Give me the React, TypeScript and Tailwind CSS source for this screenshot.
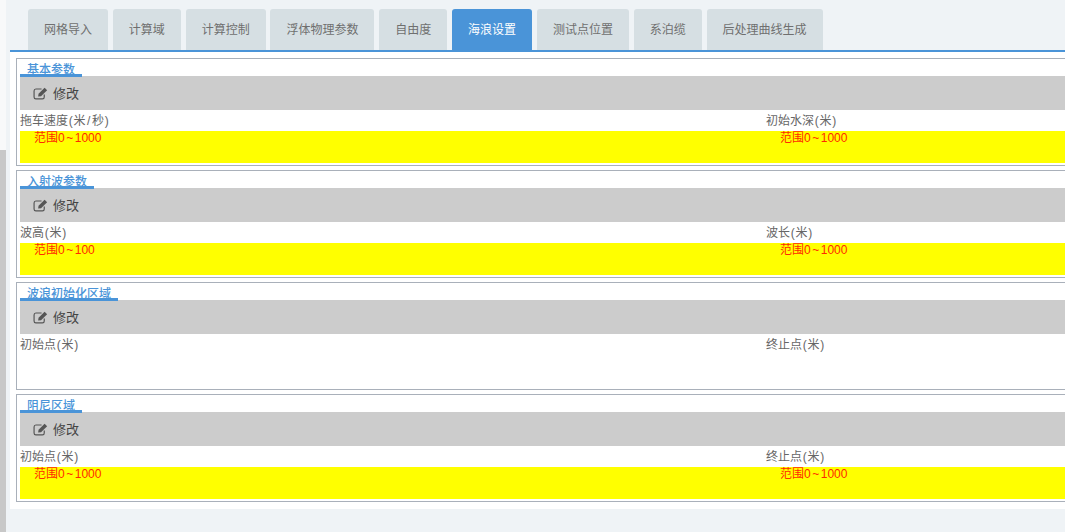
import React from 'react';

const tabs = ['网格导入', '计算域', '计算控制', '浮体物理参数', '自由度', '海浪设置', '测试点位置', '系泊缆', '后处理曲线生成'];

type Field = { label: string; unit: string; max?: string };
type Group = { title: string; underline: string; left: Field; right: Field };

const groups: Group[] = [
  {
    title: '基本参数',
    underline: 'w-[62px]',
    left: { label: '拖车速度', unit: '米/秒', max: '1000' },
    right: { label: '初始水深', unit: '米', max: '1000' },
  },
  {
    title: '入射波参数',
    underline: 'w-[74px]',
    left: { label: '波高', unit: '米', max: '100' },
    right: { label: '波长', unit: '米', max: '1000' },
  },
  {
    title: '波浪初始化区域',
    underline: 'w-[98px]',
    left: { label: '初始点', unit: '米' },
    right: { label: '终止点', unit: '米' },
  },
  {
    title: '阻尼区域',
    underline: 'w-[62px]',
    left: { label: '初始点', unit: '米', max: '1000' },
    right: { label: '终止点', unit: '米', max: '1000' },
  },
];

// outlined box with a solid pencil over its top right corner
function EditIcon() {
  return (
    <svg viewBox="0 0 14 12" className="-mt-[2px] h-[13px] w-[15px] text-[#555]" fill="none">
      <path d="M10.5 7v2.2c0 1-.7 1.8-1.7 1.8H2.7C1.7 11 1 10.2 1 9.2V3.6c0-1 .7-1.8 1.7-1.8H8" stroke="currentColor" strokeWidth="1.1" />
      <path d="M5.2 6.2 10.8.6l2.4 2.3-5.7 5.6-2.7.4z" fill="currentColor" />
    </svg>
  );
}

function FieldLabel({ field }: { field: Field }) {
  return (
    <div className="whitespace-nowrap">
      {field.label}
      <span className="px-[0.75px]">(</span>
      {field.unit.includes('/') ? (
        <>
          米<span className="px-[1.5px]">/</span>秒
        </>
      ) : (
        field.unit
      )}
      <span className="px-[0.75px]">)</span>
    </div>
  );
}

function Hint({ max }: { max?: string }) {
  return (
    <div className="pl-[14px]">
      范围0<span className="px-[1.5px]">~</span>
      {max}
    </div>
  );
}

function ParamGroup({ group }: { group: Group }) {
  const hasHint = group.left.max || group.right.max;
  return (
    <section className="h-[108px] border border-[#a9b0ba] border-r-0 pl-[3px] pt-[3px]">
      <div className="h-[14px]">
        <div className={`relative h-[15px] border-b-[3px] border-[#4a94d8] pl-[7px] text-[12px] leading-[17px] font-medium text-[#4a94d8] ${group.underline}`}>
          <span className="whitespace-nowrap">{group.title}</span>
        </div>
      </div>
      <div className="flex h-[34px] items-center gap-[5px] bg-[#cccccc] pl-[13px] pt-[2px] text-[13px] text-[#444]">
        <EditIcon />
        修改
      </div>
      <div className="grid grid-cols-[746px_1fr] pt-[3px] text-[12px] leading-[17px] text-[#666]">
        <FieldLabel field={group.left} />
        <FieldLabel field={group.right} />
      </div>
      {hasHint ? (
        <div className="mt-[1px] grid h-[32px] grid-cols-[746px_1fr] bg-[#ffff00] text-[12px] leading-[14px] text-[#ff2a00]">
          <Hint max={group.left.max} />
          <Hint max={group.right.max} />
        </div>
      ) : null}
    </section>
  );
}

export default function App() {
  return (
    <div className="flex h-[532px] w-[1065px] overflow-hidden bg-[#eff3f6] font-['Liberation_Sans','Noto_Sans_CJK_SC',sans-serif]">
      <aside className="w-[6px] shrink-0 bg-[#f8f9fa] pt-[150px]">
        <div className="h-full bg-[#c8c8c8]" />
      </aside>
      <main className="min-w-0 flex-1 pl-[4px]">
        <nav className="flex h-[52px] items-end gap-[4.8px] border-b-2 border-[#4a94d8] pl-[18px]">
          {tabs.map((tab) => (
            <div
              key={tab}
              className={
                tab === '海浪设置'
                  ? 'flex h-[41px] items-center rounded-t-[3px] bg-[#4a94d8] px-[16px] text-[12px] text-white'
                  : 'flex h-[41px] items-center rounded-t-[3px] bg-[#d6dfe3] px-[16px] text-[12px] text-[#6f6f6f]'
              }
            >
              {tab}
            </div>
          ))}
        </nav>
        <div className="flex h-[457px] flex-col gap-[4px] bg-white pl-[6px] pt-[6px]">
          {groups.map((group) => (
            <ParamGroup key={group.title} group={group} />
          ))}
        </div>
      </main>
    </div>
  );
}
